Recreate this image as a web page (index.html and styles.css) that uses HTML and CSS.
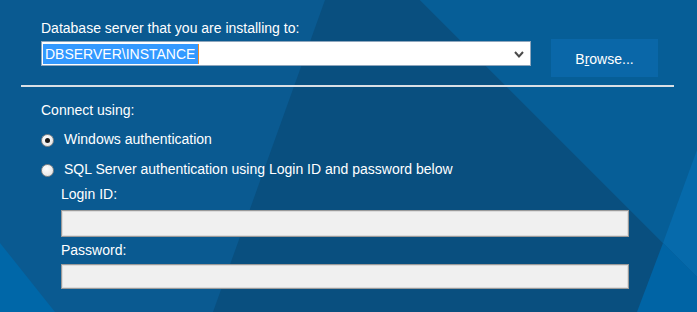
FILE: index.html
```html
<!DOCTYPE html>
<html lang="en">
<head>
  <meta charset="UTF-8">
  <title>Database server</title>
  <link rel="stylesheet" href="styles.css">
</head>
<body>
  <div class="page">
    <svg class="backdrop" width="697" height="312" viewBox="0 0 697 312" aria-hidden="true">
      <rect width="697" height="312" fill="#0a5a91"/>
      <polygon points="325,0 420,0 697,277 697,312 213,312" fill="#094f7f"/>
      <polygon points="420,0 697,0 697,277" fill="#065e97"/>
      <polygon points="697,150 663,243 697,277" fill="#066aab"/>
      <polygon points="663,243 637,312 697,312 697,277" fill="#0064a5"/>
      <polygon points="0,243 0,312 55,312" fill="#0067a8"/>
    </svg>

    <section class="server">
      <label class="caption">Database server that you are installing to:</label>
      <div class="server-row">
        <div class="combo">
          <span class="combo-value"><span class="selected">DBSERVER\INSTANCE</span></span>
          <svg class="chevron" width="10" height="7" viewBox="0 0 10 7">
            <polyline points="1,1 5,5.5 9,1" fill="none" stroke="#4a4a4a" stroke-width="2"/>
          </svg>
        </div>
        <button class="browse">B<span class="key">r</span>owse...</button>
      </div>
    </section>

    <div class="separator"></div>

    <section class="auth">
      <div class="caption">Connect using:</div>
      <label class="radio-row first">
        <span class="radio checked"></span>
        <span>Windows authentication</span>
      </label>
      <label class="radio-row">
        <span class="radio"></span>
        <span>SQL Server authentication using Login ID and password below</span>
      </label>

      <div class="credentials">
        <div class="field-label login">Login ID:</div>
        <div class="field login-box"></div>
        <div class="field-label password">Password:</div>
        <div class="field password-box"></div>
      </div>
    </section>
  </div>
</body>
</html>
```

FILE: styles.css
```css
* { box-sizing: border-box; margin: 0; padding: 0; }

body {
  font-family: "Liberation Sans", Arial, sans-serif;
  font-size: 14px;
  line-height: 16px;
  color: #ffffff;
  background: #0a5a91;
  overflow: hidden;
}

.page {
  position: relative;
  width: 697px;
  height: 312px;
  padding: 20px 23px 0 21px;
  overflow: hidden;
}
.backdrop {
  position: absolute;
  top: 0;
  left: 0;
  z-index: 0;
}
.server, .separator, .auth {
  position: relative;
  z-index: 1;
}

.server, .auth {
  padding-left: 20px;
}
.caption {
  display: block;
}

.server-row {
  display: flex;
  align-items: flex-start;
  margin-top: 3px;
}
.combo {
  display: flex;
  align-items: center;
  justify-content: space-between;
  width: 490px;
  height: 25px;
  margin-top: 2px;
  padding: 1px 6px 0 1px;
  background: #ffffff;
  border: 1px solid #8ea6bd;
}
.combo-value {
  display: flex;
  height: 20px;
}
.selected {
  display: block;
  padding: 0 3px 0 2px;
  line-height: 20px;
  background: #3399ff;
  color: #ffffff;
  border-right: 1px solid #f08a2a;
}
.chevron {
  display: block;
}

.browse {
  width: 107px;
  height: 38px;
  margin-left: 20px;
  background: #0a67a8;
  border: none;
  color: #ffffff;
  font-family: inherit;
  font-size: 14px;
  padding-top: 2px;
}
.browse .key {
  text-decoration: underline;
}

.separator {
  height: 2px;
  margin-top: 8px;
  background: #d9dfe5;
}

.auth .caption {
  margin-top: 15px;
}
.radio-row {
  display: flex;
  align-items: center;
  height: 16px;
  margin-top: 14px;
}
.radio-row.first {
  margin-top: 13px;
}
.radio {
  width: 13px;
  height: 13px;
  margin: 2px 10px 0 0;
  border-radius: 50%;
  border: 1px solid #8a8a8a;
  background: radial-gradient(circle at 40% 35%, #ffffff 0%, #ececec 60%, #d6d6d6 100%);
  position: relative;
}
.radio.checked::after {
  content: "";
  position: absolute;
  top: 3px;
  left: 3px;
  width: 5px;
  height: 5px;
  border-radius: 50%;
  background: #1a1a1a;
}

.credentials {
  padding-left: 20px;
}
.field-label.login {
  margin-top: 9px;
}
.field-label.password {
  margin-top: 5px;
}
.field {
  width: 568px;
  background: #f0f0f0;
  border: 1px solid #9a9a9a;
  box-shadow: inset 0 0 0 1px #dcdcdc;
}
.login-box {
  height: 27px;
  margin-top: 8px;
}
.password-box {
  height: 25px;
  margin-top: 6px;
}
```
